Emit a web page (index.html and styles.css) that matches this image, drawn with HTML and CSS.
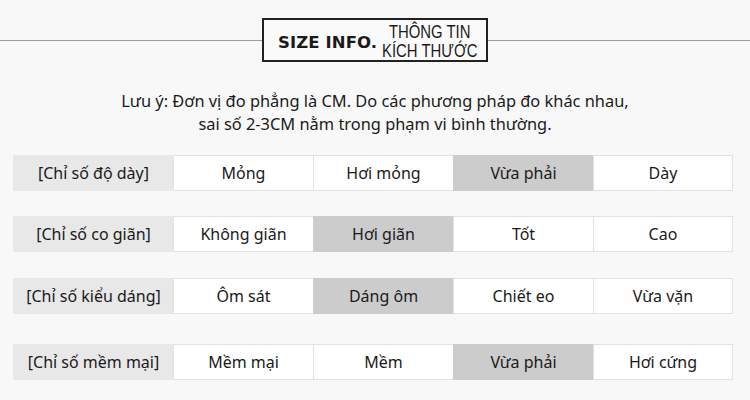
FILE: index.html
```html
<!DOCTYPE html>
<html lang="vi">
<head>
<meta charset="utf-8">
<link rel="stylesheet" href="styles.css">
</head>
<body>
<header class="title-bar">
  <div class="rule"></div>
  <div class="title-box">
    <span class="title-main">SIZE INFO.</span>
    <span class="title-sub"><span>THÔNG TIN</span><span>KÍCH THƯỚC</span></span>
  </div>
  <div class="rule"></div>
</header>
<p class="note">Lưu ý: Đơn vị đo phẳng là CM. Do các phương pháp đo khác nhau,<br>sai số 2-3CM nằm trong phạm vi bình thường.</p>
<div class="table">
  <div class="row r1">
    <div class="cell label">[Chỉ số độ dày]</div>
    <div class="cell">Mỏng</div>
    <div class="cell">Hơi mỏng</div>
    <div class="cell on">Vừa phải</div>
    <div class="cell">Dày</div>
  </div>
  <div class="row r2">
    <div class="cell label">[Chỉ số co giãn]</div>
    <div class="cell">Không giãn</div>
    <div class="cell on">Hơi giãn</div>
    <div class="cell">Tốt</div>
    <div class="cell">Cao</div>
  </div>
  <div class="row r3">
    <div class="cell label">[Chỉ số kiểu dáng]</div>
    <div class="cell">Ôm sát</div>
    <div class="cell on">Dáng ôm</div>
    <div class="cell">Chiết eo</div>
    <div class="cell">Vừa vặn</div>
  </div>
  <div class="row r4">
    <div class="cell label">[Chỉ số mềm mại]</div>
    <div class="cell">Mềm mại</div>
    <div class="cell">Mềm</div>
    <div class="cell on">Vừa phải</div>
    <div class="cell">Hơi cứng</div>
  </div>
</div>
</body>
</html>
```
FILE: styles.css
```css
* { box-sizing: border-box; }
html, body { margin: 0; padding: 0; }
body {
  width: 750px;
  height: 400px;
  overflow: hidden;
  background: #f8f8f8;
  font-family: "Noto Sans", "DejaVu Sans", sans-serif;
  color: #1a1a1a;
}
.title-bar {
  display: flex;
  align-items: center;
  padding-top: 18px;
}
.rule {
  flex: 1;
  height: 1px;
  background: #9a9a9a;
}
.title-box {
  width: 226px;
  height: 44px;
  border: 2px solid #222;
  display: flex;
  align-items: flex-start;
  padding-left: 14px;
  background: #fafafa;
}
.title-main {
  font-family: "DejaVu Sans", sans-serif;
  font-weight: bold;
  font-size: 16.5px;
  line-height: 19px;
  letter-spacing: 0.1px;
  color: #1a1a1a;
  margin-top: 13px;
  white-space: nowrap;
}
.title-sub {
  display: flex;
  flex-direction: column;
  align-items: center;
  margin-top: 3px;
  margin-left: 5px;
  font-family: "Liberation Sans", sans-serif;
  font-size: 17.5px;
  line-height: 18.5px;
  transform: scaleX(0.85);
  transform-origin: left center;
  color: #1a1a1a;
  white-space: nowrap;
}
.note {
  margin: 27px 0 0;
  text-align: center;
  font-size: 16.4px;
  line-height: 23px;
  color: #1a1a1a;
}
.table {
  margin: 0 0 0 13px;
  width: 720px;
  display: flex;
  flex-direction: column;
}
.row {
  display: grid;
  grid-template-columns: 161px 140px 140px 140px 139px;
  height: 36px;
}
.r1 { margin-top: 20px; }
.r2 { margin-top: 25px; }
.r3 { margin-top: 26px; }
.r4 { margin-top: 30px; }
.cell {
  display: flex;
  align-items: center;
  justify-content: center;
  background: #fff;
  border: 1px solid #e2e2e2;
  margin-left: -1px;
  font-size: 16px;
  color: #1a1a1a;
}
.cell.label {
  background: #e8e8e8;
  border-color: #e8e8e8;
  margin-left: 0;
}
.cell.on {
  background: #cccccc;
  border-color: #cccccc;
}
```
